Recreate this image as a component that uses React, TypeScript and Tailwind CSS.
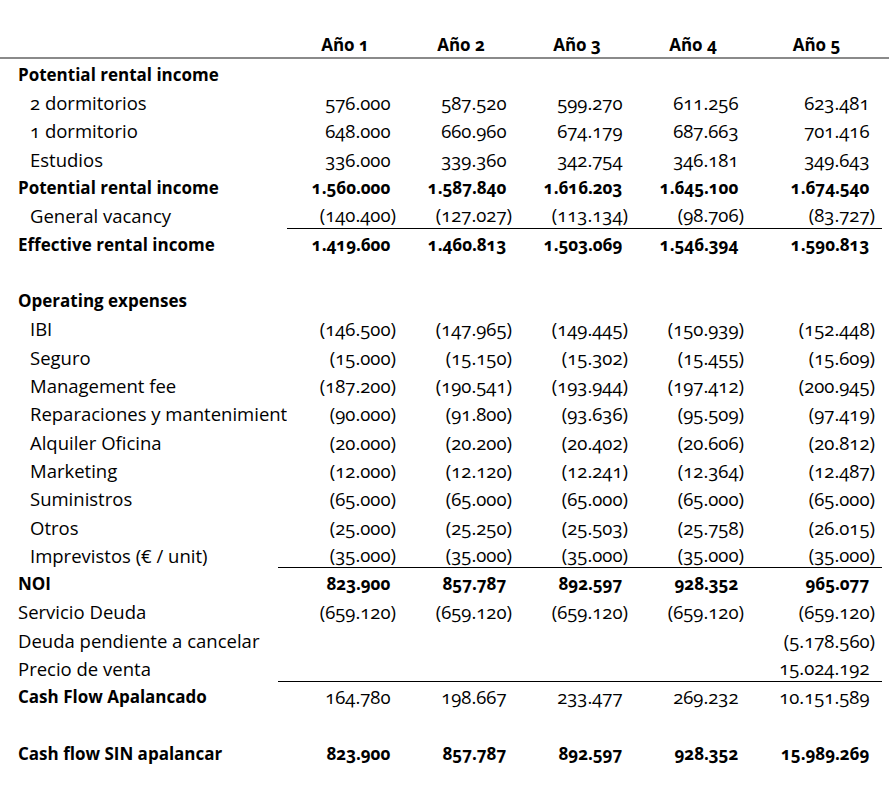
type Row = {
	label?: string;
	kind?: "bold" | "indent" | "plain";
	values?: (string | null)[];
	boldValues?: boolean;
	line?: "wide" | "narrow";
};

const rows: Row[] = [
	{ label: "Potential rental income", kind: "bold" },
	{ label: "2 dormitorios", kind: "indent", values: ["576.000", "587.520", "599.270", "611.256", "623.481"] },
	{ label: "1 dormitorio", kind: "indent", values: ["648.000", "660.960", "674.179", "687.663", "701.416"] },
	{ label: "Estudios", kind: "indent", values: ["336.000", "339.360", "342.754", "346.181", "349.643"] },
	{
		label: "Potential rental income",
		kind: "bold",
		boldValues: true,
		values: ["1.560.000", "1.587.840", "1.616.203", "1.645.100", "1.674.540"],
	},
	{
		label: "General vacancy",
		kind: "indent",
		line: "narrow",
		values: ["(140.400)", "(127.027)", "(113.134)", "(98.706)", "(83.727)"],
	},
	{
		label: "Effective rental income",
		kind: "bold",
		boldValues: true,
		values: ["1.419.600", "1.460.813", "1.503.069", "1.546.394", "1.590.813"],
	},
	{},
	{ label: "Operating expenses", kind: "bold" },
	{ label: "IBI", kind: "indent", values: ["(146.500)", "(147.965)", "(149.445)", "(150.939)", "(152.448)"] },
	{ label: "Seguro", kind: "indent", values: ["(15.000)", "(15.150)", "(15.302)", "(15.455)", "(15.609)"] },
	{ label: "Management fee", kind: "indent", values: ["(187.200)", "(190.541)", "(193.944)", "(197.412)", "(200.945)"] },
	{
		label: "Reparaciones y mantenimiento",
		kind: "indent",
		values: ["(90.000)", "(91.800)", "(93.636)", "(95.509)", "(97.419)"],
	},
	{ label: "Alquiler Oficina", kind: "indent", values: ["(20.000)", "(20.200)", "(20.402)", "(20.606)", "(20.812)"] },
	{ label: "Marketing", kind: "indent", values: ["(12.000)", "(12.120)", "(12.241)", "(12.364)", "(12.487)"] },
	{ label: "Suministros", kind: "indent", values: ["(65.000)", "(65.000)", "(65.000)", "(65.000)", "(65.000)"] },
	{ label: "Otros", kind: "indent", values: ["(25.000)", "(25.250)", "(25.503)", "(25.758)", "(26.015)"] },
	{
		label: "Imprevistos (€ / unit)",
		kind: "indent",
		line: "wide",
		values: ["(35.000)", "(35.000)", "(35.000)", "(35.000)", "(35.000)"],
	},
	{ label: "NOI", kind: "bold", boldValues: true, values: ["823.900", "857.787", "892.597", "928.352", "965.077"] },
	{ label: "Servicio Deuda", kind: "plain", values: ["(659.120)", "(659.120)", "(659.120)", "(659.120)", "(659.120)"] },
	{ label: "Deuda pendiente a cancelar", kind: "plain", values: [null, null, null, null, "(5.178.560)"] },
	{ label: "Precio de venta", kind: "plain", line: "wide", values: [null, null, null, null, "15.024.192"] },
	{ label: "Cash Flow Apalancado", kind: "bold", values: ["164.780", "198.667", "233.477", "269.232", "10.151.589"] },
	{},
	{
		label: "Cash flow SIN apalancar",
		kind: "bold",
		boldValues: true,
		values: ["823.900", "857.787", "892.597", "928.352", "15.989.269"],
	},
];

const colWidths = ["w-[116px]", "w-[116px]", "w-[116px]", "w-[116px]", "w-[131px]"];

function Amount({ value, bold }: { value: string | null; bold?: boolean }) {
	if (!value) return null;
	const negative = value.startsWith("(");
	return (
		<span className={bold ? "font-bold text-[17px]" : ""}>
			{value}
			{!negative && <span className="invisible">)</span>}
		</span>
	);
}

export default function App() {
	return (
		<main className="bg-white text-black pt-[29px] font-['Open_Sans',sans-serif] text-[18.5px] [font-variant-numeric:oldstyle-nums]">
			<div className="flex h-[30px] border-b-2 border-[#8a8a8a] pr-[7px]">
				<div className="w-[287px]" />
				{["Año 1", "Año 2", "Año 3", "Año 4", "Año 5"].map((year, i) => (
					<div
						key={year}
						className={`${colWidths[i]} flex items-end justify-center pb-[2px] leading-[20px] font-bold text-[17px]`}
					>
						{year}
					</div>
				))}
			</div>

			<div className="pr-[7px]">
				{rows.map((row, idx) => (
					<div key={idx} className="flex h-[28.3px]">
						<div
							className={`${row.line === "wide" ? "w-[278px]" : "w-[287px]"} shrink-0 overflow-hidden whitespace-nowrap flex items-end pb-[2.5px] leading-[20px] ${
								row.kind === "indent" ? "pl-[30px]" : "pl-[18px]"
							} ${row.kind === "bold" ? "font-bold text-[17px]" : ""}`}
						>
							{row.label}
						</div>
						<div
							className={`flex ${row.line ? "border-b border-black" : ""} ${
								row.line === "wide" ? "pl-[9px]" : ""
							}`}
						>
							{colWidths.map((w, i) => (
								<div
									key={i}
									className={`${w} flex items-end justify-end pr-[7px] pb-[2.5px] leading-[20px] whitespace-nowrap`}
								>
									<Amount value={row.values?.[i] ?? null} bold={row.boldValues} />
								</div>
							))}
						</div>
					</div>
				))}
			</div>
		</main>
	);
}
